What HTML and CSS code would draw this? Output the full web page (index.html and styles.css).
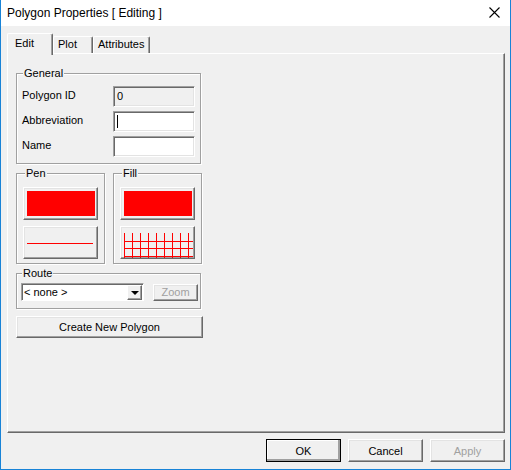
FILE: index.html
```html
<!DOCTYPE html>
<html lang="en">
<head>
    <meta charset="UTF-8">
    <title>Polygon Properties [ Editing ]</title>
    <link rel="stylesheet" href="styles.css">
</head>
<body>
    <div class="window">
        <div class="title-bar">
            <span class="title">Polygon Properties [ Editing ]</span>
            <svg class="close" width="11" height="11" viewBox="0 0 11 11">
                <path d="M0.5 0.5 L10.5 10.5 M10.5 0.5 L0.5 10.5" stroke="#000" stroke-width="1.1" fill="none"/>
            </svg>
        </div>

        <div class="tabs">
            <div class="tab tab-active tab-edit">Edit</div>
            <div class="tab tab-plot">Plot</div>
            <div class="tab tab-attr">Attributes</div>
        </div>

        <div class="panel">
            <fieldset class="group group-general">
                <legend>General</legend>
                <div class="row">
                    <span class="label">Polygon ID</span>
                    <div class="field field-readonly">0</div>
                </div>
                <div class="row">
                    <span class="label">Abbreviation</span>
                    <div class="field"><span class="caret"></span></div>
                </div>
                <div class="row">
                    <span class="label">Name</span>
                    <div class="field"></div>
                </div>
            </fieldset>

            <div class="pair">
                <fieldset class="group group-small">
                    <legend>Pen</legend>
                    <button class="btn swatch"><span class="red-box"></span></button>
                    <button class="btn swatch"><span class="red-line"></span></button>
                </fieldset>
                <fieldset class="group group-small">
                    <legend>Fill</legend>
                    <button class="btn swatch"><span class="red-box"></span></button>
                    <button class="btn swatch">
                        <svg class="hatch" width="69" height="25" viewBox="0 0 69 25" shape-rendering="crispEdges">
                            <g stroke="#ff0000" stroke-width="1" fill="none">
                                <path d="M0.5 0 V25 M8.5 0 V25 M16.5 0 V25 M24.5 0 V25 M32.5 0 V25 M40.5 0 V25 M48.5 0 V25 M56.5 0 V25 M64.5 0 V25"/>
                                <path d="M0 8.5 H69 M0 15.5 H69 M0 23.5 H69"/>
                            </g>
                        </svg>
                    </button>
                </fieldset>
            </div>

            <fieldset class="group group-route">
                <legend>Route</legend>
                <div class="route-row">
                    <div class="combo">
                        <span class="combo-text">&lt; none &gt;</span>
                        <span class="combo-arrow"><span class="triangle"></span></span>
                    </div>
                    <button class="btn btn-zoom" disabled>Zoom</button>
                </div>
            </fieldset>

            <button class="btn btn-create">Create New Polygon</button>
        </div>

        <div class="footer">
            <button class="btn btn-foot btn-default">OK</button>
            <button class="btn btn-foot">Cancel</button>
            <button class="btn btn-foot" disabled>Apply</button>
        </div>
    </div>
</body>
</html>
```

FILE: styles.css
```css
body {
    margin: 0;
    padding: 0;
    font-family: "Liberation Sans", Arial, sans-serif;
    font-size: 11px;
    color: #000;
}

.window {
    width: 511px;
    height: 470px;
    box-sizing: border-box;
    background-color: #f0f0f0;
    border: 1px solid #1883d7;
    border-top: none;
}

.title-bar {
    height: 26px;
    background-color: #fff;
    display: flex;
    align-items: center;
    justify-content: space-between;
    padding: 0 10px 0 6px;
}

.title {
    font-size: 12px;
    padding-bottom: 1px;
}

.close {
    margin-bottom: 1px;
}

/* tabs */
.tabs {
    display: flex;
    align-items: flex-end;
    height: 20px;
    margin-top: 7px;
    padding-left: 6px;
}

.tab {
    box-sizing: border-box;
    height: 17px;
    background-color: #f0f0f0;
    border-top: 1px solid #fff;
    border-left: 1px solid #fff;
    border-right: 1px solid #696969;
    box-shadow: inset -1px 0 0 #a0a0a0;
    border-radius: 2px 2px 0 0;
    line-height: 15px;
    padding-left: 4px;
}

.tab-active {
    height: 22px;
    margin-bottom: -2px;
    line-height: 18px;
    padding-left: 7px;
    z-index: 1;
    position: relative;
}

.tab-edit {
    width: 46px;
}

.tab-plot {
    width: 40px;
}

.tab-attr {
    width: 57px;
}

.panel {
    box-sizing: border-box;
    width: 498px;
    height: 380px;
    margin-left: 6px;
    border-top: 1px solid #fff;
    border-left: 1px solid #fff;
    border-right: 1px solid #696969;
    border-bottom: 1px solid #696969;
    box-shadow: inset -1px -1px 0 #a0a0a0;
    padding: 13px 0 0 8px;
}

/* group boxes */
.group {
    box-sizing: border-box;
    margin: 0;
    border: 1px solid #a0a0a0;
    box-shadow: 1px 1px 0 #fff, inset 1px 1px 0 #fff;
}

.group legend {
    padding: 0 1px;
    margin-left: 1px;
    line-height: 13px;
    background-color: #f0f0f0;
}

.group-general {
    width: 185px;
    padding: 6px 4px 6px 5px;
}

.row {
    display: flex;
    align-items: center;
    height: 21px;
    margin-bottom: 4px;
}

.row:last-child {
    margin-bottom: 0;
}

.label {
    width: 91px;
    padding-bottom: 4px;
}

.field {
    box-sizing: border-box;
    width: 82px;
    height: 21px;
    background-color: #fff;
    border: 1px solid;
    border-color: #a0a0a0 #fff #fff #a0a0a0;
    box-shadow: inset 1px 1px 0 #696969, inset -1px -1px 0 #e3e3e3;
    padding: 3px 0 0 3px;
}

.field-readonly {
    background-color: #f0f0f0;
}

.caret {
    display: block;
    width: 1px;
    height: 13px;
    background-color: #000;
}

.pair {
    display: flex;
    gap: 8px;
    margin-top: 3px;
}

.group-small {
    width: 89px;
    height: 97px;
    padding: 7px 0 0 6px;
}

.group-small legend {
    margin-left: 2px;
}

/* buttons */
.btn {
    box-sizing: border-box;
    margin: 0;
    padding: 0;
    font-family: inherit;
    font-size: 11px;
    color: #000;
    background-color: #f0f0f0;
    border: 1px solid;
    border-color: #fff #696969 #696969 #fff;
    box-shadow: inset -1px -1px 0 #a0a0a0, inset 1px 1px 0 #e3e3e3;
    display: flex;
    align-items: center;
    justify-content: center;
}

.btn:disabled {
    color: #a0a0a0;
}

.swatch {
    width: 75px;
    height: 33px;
    margin-bottom: 6px;
    justify-content: flex-start;
    padding-left: 3px;
}

.red-box {
    width: 68px;
    height: 25px;
    background-color: #ff0000;
}

.red-line {
    display: block;
    width: 66px;
    height: 0;
    border-top: 1px solid #ff0000;
    margin-top: 1px;
}

.hatch {
    display: block;
    margin-top: 5px;
}

.group-route {
    width: 185px;
    margin-top: 3px;
    padding: 3px 0 7px 4px;
}

.route-row {
    display: flex;
    align-items: center;
    gap: 9px;
}

.combo {
    box-sizing: border-box;
    width: 123px;
    height: 18px;
    background-color: #fff;
    border: 1px solid;
    border-color: #a0a0a0 #fff #fff #a0a0a0;
    box-shadow: inset 1px 1px 0 #696969;
    display: flex;
    align-items: center;
    justify-content: space-between;
    padding: 1px 1px 0 2px;
}

.combo-text {
    padding-bottom: 1px;
}

.combo-arrow {
    box-sizing: border-box;
    width: 15px;
    height: 15px;
    background-color: #f0f0f0;
    border: 1px solid;
    border-color: #fff #696969 #696969 #fff;
    box-shadow: inset -1px -1px 0 #a0a0a0;
    display: flex;
    align-items: center;
    justify-content: center;
}

.triangle {
    width: 0;
    height: 0;
    border-left: 4px solid transparent;
    border-right: 4px solid transparent;
    border-top: 4px solid #000;
}

.btn-zoom {
    width: 45px;
    height: 17px;
}

.btn-create {
    width: 187px;
    height: 22px;
    margin-top: 7px;
}

.footer {
    display: flex;
    justify-content: flex-end;
    gap: 7px;
    margin-top: 6px;
    padding-right: 5px;
}

.btn-foot {
    width: 75px;
    height: 23px;
}

.btn-default {
    outline: 1px solid #000;
    outline-offset: -1px;
    border-color: #fff #696969 #696969 #fff;
    box-shadow: inset -2px -2px 0 #a0a0a0, inset 1px 1px 0 #fff;
}
```
